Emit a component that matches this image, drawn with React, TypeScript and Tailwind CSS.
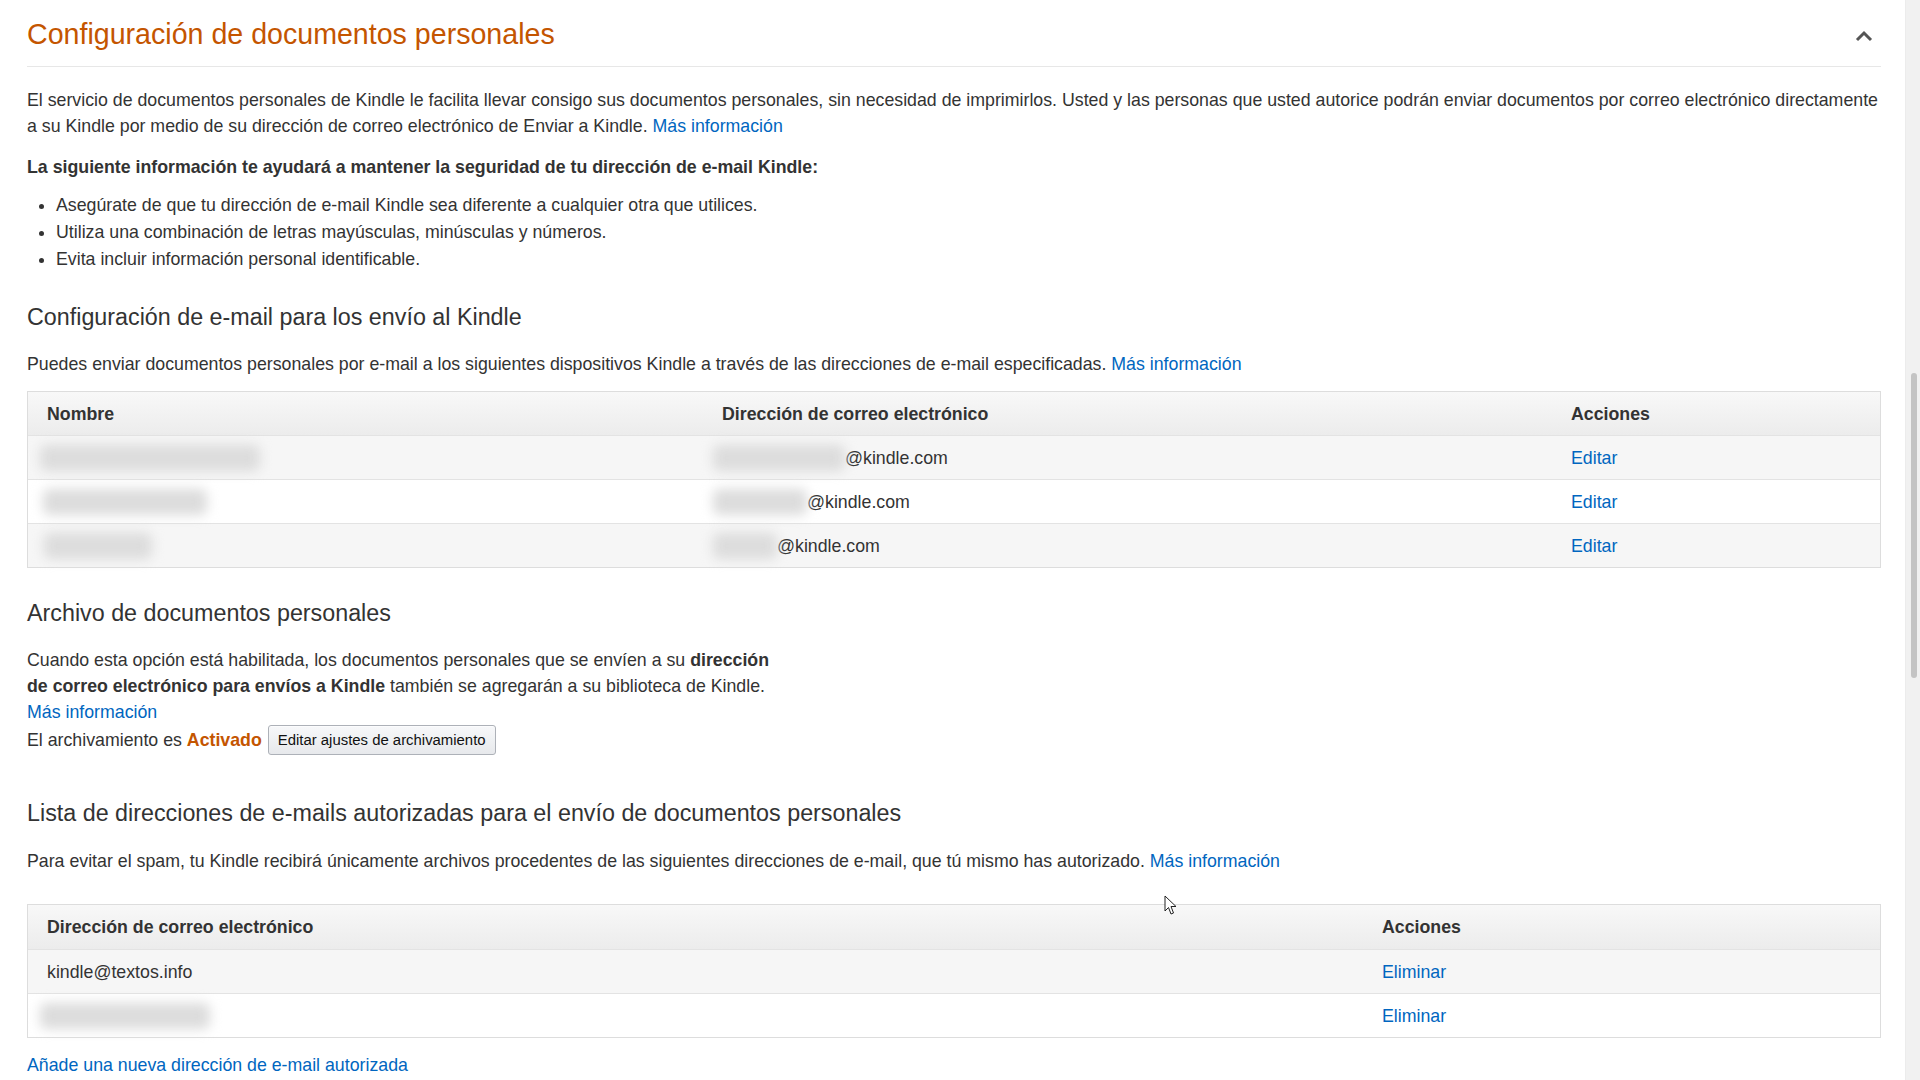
import React from "react";

const nameRows = [
  { bg: "bg-[#f6f6f6]", name: "w-[220px] -ml-[7px]", mail: "w-[132px]" },
  { bg: "bg-white", name: "w-[164px] -ml-[4px]", mail: "w-[94px]" },
  { bg: "bg-[#f6f6f6]", name: "w-[108px] -ml-[3px]", mail: "w-[64px]" },
];

function Blur({ className }: { className: string }) {
  return <div className={`h-[26px] shrink-0 rounded-[6px] bg-[#dcdcdc] blur-[6px] ${className}`} />;
}

function Link({ children }: { children: React.ReactNode }) {
  return <a className="cursor-pointer text-[#0066c0] hover:underline">{children}</a>;
}

export default function App() {
  return (
    <div className="relative flex h-screen w-full overflow-hidden bg-white font-['Liberation_Sans',Arial,sans-serif] text-[17.75px] text-[#333]">
      <main className="flex-1 pl-[27px] pr-[24px]">
        {/* Header */}
        <div className="flex h-[67px] items-center justify-between border-b border-[#e7e7e7]">
          <h1 className="mt-[2px] text-[28.6px] leading-[36px] text-[#c45500]">
            Configuración de documentos personales
          </h1>
          <svg className="mr-[8px] mt-[6px]" width="18" height="12" viewBox="0 0 18 12" fill="none">
            <polyline points="2,10 9,3 16,10" stroke="#555" strokeWidth="3" />
          </svg>
        </div>

        <p className="mt-[20px] leading-[26px]">
          El servicio de documentos personales de Kindle le facilita llevar consigo sus documentos personales, sin
          necesidad de imprimirlos. Usted y las personas que usted autorice podrán enviar documentos por correo
          electrónico directamente a su Kindle por medio de su dirección de correo electrónico de Enviar a Kindle.{" "}
          <Link>Más información</Link>
        </p>
        <p className="mt-[15px] font-bold leading-[26px]">
          La siguiente información te ayudará a mantener la seguridad de tu dirección de e-mail Kindle:
        </p>
        <ul className="mt-[12px] list-disc pl-[29px] leading-[27px]">
          <li>Asegúrate de que tu dirección de e-mail Kindle sea diferente a cualquier otra que utilices.</li>
          <li>Utiliza una combinación de letras mayúsculas, minúsculas y números.</li>
          <li>Evita incluir información personal identificable.</li>
        </ul>

        {/* Send to Kindle */}
        <h3 className="mt-[29px] text-[23.3px] leading-[30px]">Configuración de e-mail para los envío al Kindle</h3>
        <p className="mt-[19px] leading-[26px]">
          Puedes enviar documentos personales por e-mail a los siguientes dispositivos Kindle a través de las
          direcciones de e-mail especificadas. <Link>Más información</Link>
        </p>
        <div className="mt-[14px] border border-[#ddd]">
          <div className="grid h-[43px] grid-cols-[675px_849px_1fr] items-center bg-linear-to-b from-[#f8f8f8] to-[#ececec] pt-[1px] font-bold">
            <div className="px-[19px]">Nombre</div>
            <div className="px-[19px]">Dirección de correo electrónico</div>
            <div className="px-[19px]">Acciones</div>
          </div>
          {nameRows.map((r, i) => (
            <div
              key={i}
              className={`grid h-[44px] grid-cols-[675px_849px_1fr] items-center border-t border-[#e3e3e3] ${r.bg}`}
            >
              <div className="px-[19px]">
                <Blur className={r.name} />
              </div>
              <div className="flex items-center px-[19px] pt-[1px]">
                <Blur className={`-ml-[9px] ${r.mail}`} />
                <span>@kindle.com</span>
              </div>
              <div className="px-[19px] pt-[1px]">
                <Link>Editar</Link>
              </div>
            </div>
          ))}
        </div>

        {/* Archive */}
        <h3 className="mt-[30px] text-[23.3px] leading-[30px]">Archivo de documentos personales</h3>
        <div className="mt-[19px] w-[752px] leading-[26px]">
          <p>
            Cuando esta opción está habilitada, los documentos personales que se envíen a su{" "}
            <b>dirección de correo electrónico para envíos a Kindle</b> también se agregarán a su biblioteca de
            Kindle.
          </p>
          <Link>Más información</Link>
        </div>
        <div className="flex h-[30px] items-center">
          <span>
            El archivamiento es <b className="text-[#c45500]">Activado</b>
          </span>
          <button className="ml-[6px] h-[30px] rounded-[3px] border border-[#adb1b8] bg-linear-to-b from-[#f7f8fa] to-[#e7e9ec] px-[9px] text-[14.9px] text-[#111] shadow-[0_1px_0_rgba(255,255,255,0.6)_inset]">
            Editar ajustes de archivamiento
          </button>
        </div>

        {/* Approved list */}
        <h3 className="mt-[43px] text-[23.3px] leading-[30px]">
          Lista de direcciones de e-mails autorizadas para el envío de documentos personales
        </h3>
        <p className="mt-[20px] leading-[26px]">
          Para evitar el spam, tu Kindle recibirá únicamente archivos procedentes de las siguientes direcciones de
          e-mail, que tú mismo has autorizado. <Link>Más información</Link>
        </p>
        <div className="mt-[30px] border border-[#ddd]">
          <div className="grid h-[44px] grid-cols-[1335px_1fr] items-center bg-linear-to-b from-[#f8f8f8] to-[#ececec] font-bold">
            <div className="px-[19px]">Dirección de correo electrónico</div>
            <div className="px-[19px]">Acciones</div>
          </div>
          <div className="grid h-[44px] grid-cols-[1335px_1fr] items-center border-t border-[#e3e3e3] bg-[#f6f6f6]">
            <div className="px-[19px] pt-[1px]">kindle@textos.info</div>
            <div className="px-[19px] pt-[1px]">
              <Link>Eliminar</Link>
            </div>
          </div>
          <div className="grid h-[44px] grid-cols-[1335px_1fr] items-center border-t border-[#e3e3e3] bg-white">
            <div className="px-[19px]">
              <Blur className="-ml-[7px] w-[170px]" />
            </div>
            <div className="px-[19px] pt-[1px]">
              <Link>Eliminar</Link>
            </div>
          </div>
        </div>
        <p className="mt-[14px] leading-[26px]">
          <Link>Añade una nueva dirección de e-mail autorizada</Link>
        </p>
      </main>

      {/* Scrollbar */}
      <div className="h-full w-[15px] shrink-0 border-l border-[#ececec] bg-[#f1f1f1] pt-[373px]">
        <div className="ml-[5px] h-[305px] w-[6px] rounded-full bg-[#c4c4c4]" />
      </div>

      {/* Mouse cursor */}
      <svg className="absolute left-[1164px] top-[895px]" width="13" height="21" viewBox="0 0 13 21">
        <path d="M1 1 L1 16 L4.5 12.5 L7 19 L9.5 18 L7 11.5 L12 11.5 Z" fill="#fff" stroke="#222" strokeWidth="1" />
      </svg>
    </div>
  );
}
